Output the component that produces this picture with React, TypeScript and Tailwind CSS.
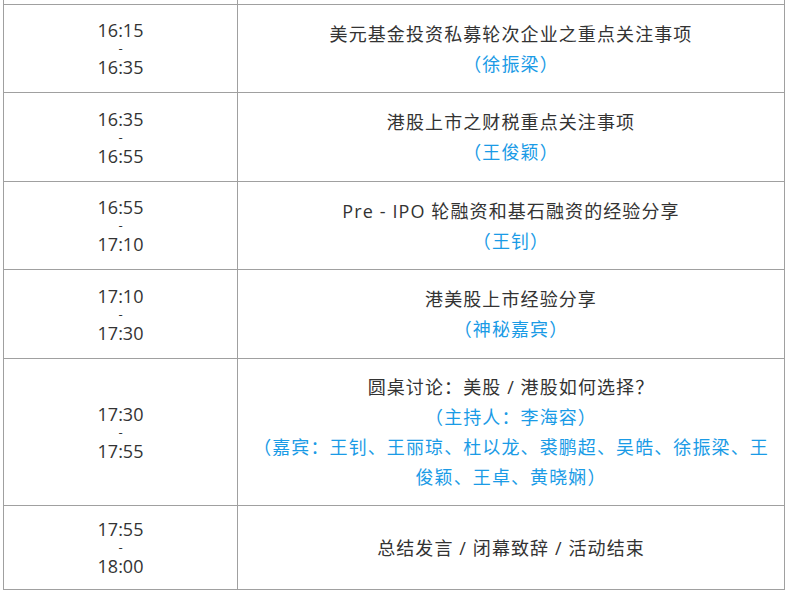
import React from "react";

const FONT = '"Open Sans", "Noto Sans CJK SC", sans-serif';

type Row = { h: string; start: string; end: string; title: React.ReactNode; subs: React.ReactNode[] };

const rows: Row[] = [
  { h: "h-[88px]", start: "16:15", end: "16:35", title: "美元基金投资私募轮次企业之重点关注事项", subs: ["（徐振梁）"] },
  { h: "h-[89px]", start: "16:35", end: "16:55", title: "港股上市之财税重点关注事项", subs: ["（王俊颖）"] },
  { h: "h-[88px]", start: "16:55", end: "17:10", title: "Pre - IPO 轮融资和基石融资的经验分享", subs: ["（王钊）"] },
  { h: "h-[89px]", start: "17:10", end: "17:30", title: "港美股上市经验分享", subs: ["（神秘嘉宾）"] },
  {
    h: "h-[147px]",
    start: "17:30",
    end: "17:55",
    title: "圆桌讨论：美股 / 港股如何选择？",
    subs: ["（主持人：李海容）", "（嘉宾：王钊、王丽琼、杜以龙、裘鹏超、吴皓、徐振梁、王", "俊颖、王卓、黄晓娴）"],
  },
  { h: "h-[85px]", start: "17:55", end: "18:00", title: "总结发言 / 闭幕致辞 / 活动结束", subs: [] },
];

export default function App() {
  return (
    <div className="w-[787px] h-[592px] bg-white overflow-hidden" style={{ fontFamily: FONT }}>
      <div className="ml-[3px] w-[782px] border-x border-[#a0a0a0]">
        <div className="flex h-[4px]">
          <div className="w-[234px] border-r border-[#a0a0a0]" />
          <div className="flex-1" />
        </div>
        {rows.map((r, i) => (
          <div key={i} className={`flex border-t border-[#a0a0a0] ${r.h} ${i === rows.length - 1 ? "border-b" : ""}`}>
            <div className="w-[234px] border-r border-[#a0a0a0] flex flex-col items-center justify-center text-[18px] text-[#333333]">
              <div className="leading-[20px]">{r.start}</div>
              <div className="text-[13px] leading-[17px]">-</div>
              <div className="leading-[20px]">{r.end}</div>
            </div>
            <div className="flex-1 flex flex-col items-center justify-center text-[18px] leading-[30px] tracking-[1.1px] whitespace-nowrap">
              <div className="text-[#333333]">{r.title}</div>
              {r.subs.map((s, j) => (
                <div key={j} className="text-[#1a9be6]">{s}</div>
              ))}
            </div>
          </div>
        ))}
      </div>
    </div>
  );
}
